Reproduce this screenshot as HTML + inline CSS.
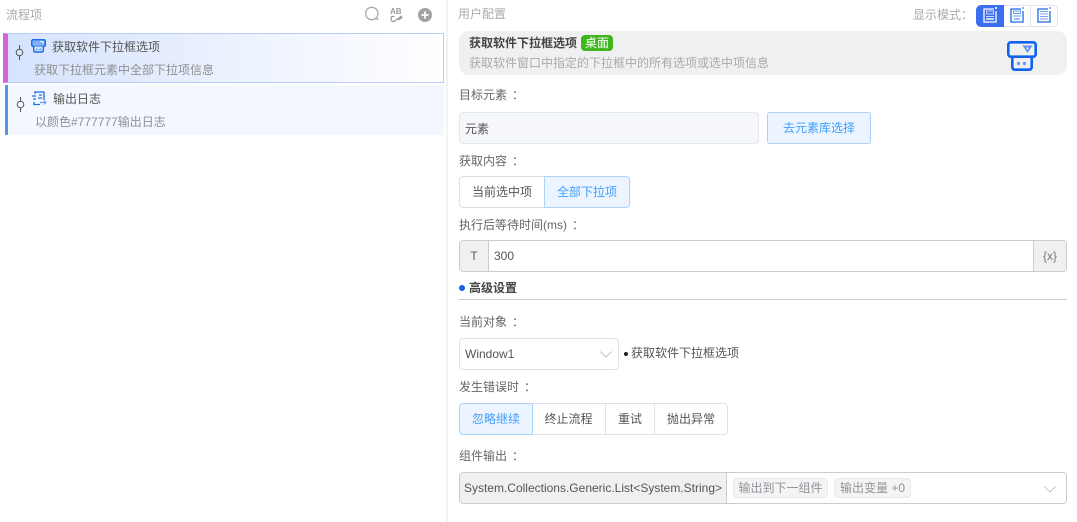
<!DOCTYPE html>
<html lang="zh"><head><meta charset="utf-8"><style>
html,body{margin:0;padding:0;background:#fff}
#p{position:relative;width:1077px;height:522px;overflow:hidden;font:12px/16px "Liberation Sans","Noto Sans CJK SC",sans-serif;color:#606266;filter:blur(.25px)}
#p div,#p svg{position:absolute;box-sizing:border-box}
.t{white-space:nowrap;height:16px}
.b{border:1px solid #dcdfe6}
.c{display:flex;align-items:center;justify-content:center;white-space:nowrap}
.a{background:#ecf5ff;border:1px solid #a9d3fb!important;color:#409eff}
i{font-style:normal;position:relative;left:5px}
</style></head><body><div id="p">
<div style="left:446px;top:0;width:2px;height:522px;background:#f3f3f3"></div>
<div class="t" style="left:6px;top:7px;color:#aaa">流程项</div>
<svg style="left:364px;top:6px" width="16" height="16" viewBox="0 0 16 16" fill="none" stroke="#aaa" stroke-width="1.300"><circle cx="7.800" cy="7.500" r="6.200"/><path d="M12.300 12l2 2"/></svg>
<div style="left:390px;top:8px;font:bold 8px/8px 'Liberation Sans',sans-serif;color:#999">AB</div>
<svg style="left:390px;top:15px" width="13" height="8" viewBox="0 0 13 8" fill="none" stroke="#999" stroke-width="1.200"><path d="M4.500 1.500H2.500Q1 1.500 1 3.500T2.500 6.500H4l4-3"/><path d="M8 4.500l4-3" stroke-width="2.500"/></svg>
<svg style="left:418px;top:8px" width="14" height="14" viewBox="0 0 14 14"><circle cx="7" cy="7" r="7" fill="#a3a3a3"/><path d="M7 3.500v7M3.500 7h7" stroke="#fff" stroke-width="1.800"/></svg>

<div style="left:3px;top:33px;width:441px;height:50px;background:linear-gradient(90deg,#d6e3fd,#fff);border:1px solid #b8cdf9;border-left:5px solid #d663dc"></div>
<svg style="left:15px;top:44px" width="9" height="17" viewBox="0 0 9 17" fill="none" stroke="#555" stroke-width="1"><circle cx="4.500" cy="8.500" r="3.300"/><path d="M4.500 1v4M4.500 12v4"/></svg>
<svg style="left:31px;top:39px" width="15" height="14" viewBox="0 0 15 14"><rect x=".7" y=".7" width="13.600" height="6.800" rx="1.500" fill="#7fb0f7" stroke="#1a6be8" stroke-width="1.400"/><path d="M9 2.500h3v2.500" stroke="#e8f0ff" fill="none"/><path d="M2.700 7.500v4.300q0 1.200 1.200 1.200h7.200q1.200 0 1.200-1.200V7.500" fill="#cfe0fb" stroke="#1a6be8" stroke-width="1.400"/><path d="M5 10.200h1.500M8.500 10.200H10" stroke="#1a6be8"/></svg>
<div class="t" style="left:52px;top:39px;color:#555">获取软件下拉框选项</div>
<div class="t" style="left:34px;top:62px;color:#909090">获取下拉框元素中全部下拉项信息</div>

<div style="left:5px;top:85px;width:439px;height:50px;background:#f3f7ff;border-left:3px solid #5496e2"></div>
<svg style="left:16px;top:96px" width="9" height="17" viewBox="0 0 9 17" fill="none" stroke="#555" stroke-width="1"><circle cx="4.500" cy="8.500" r="3.300"/><path d="M4.500 1v4M4.500 12v4"/></svg>
<svg style="left:32px;top:91px" width="15" height="15" viewBox="0 0 15 15" fill="none" stroke="#1a6be8" stroke-width="1.300"><path d="M3 3V1h9v8M2 11v2.500h6"/><path d="M0 5h4M7 4h3M1 8h3M6 7h4"/><path d="M8 11.500h6" stroke="#6f9cf0"/><path d="M12 9.500l2 2-2 2" stroke="#6f9cf0" stroke-width="1"/></svg>
<div class="t" style="left:53px;top:91px;color:#555">输出日志</div>
<div class="t" style="left:35px;top:114px;color:#909090">以颜色#777777输出日志</div>

<div class="t" style="left:458px;top:6px;color:#aaa">用户配置</div>
<div class="t" style="left:913px;top:7px;color:#aaa">显示模式<i style="left:0">：</i></div>
<div style="left:976px;top:5px;width:82px;height:22px;border:1px solid #e2e5ee;border-radius:5px"></div>
<div style="left:976px;top:5px;width:28px;height:22px;background:#3b6ff0;border-radius:5px 0 0 5px"></div>
<div style="left:1030px;top:5px;width:1px;height:22px;background:#e2e5ee"></div>
<svg style="left:983px;top:7px" width="15" height="16" viewBox="0 0 15 16" fill="none"><path d="M11 2H1v13h12V4" stroke="#fff" stroke-width="1.300"/><rect x="3.500" y="4" width="7" height="3" stroke="#c6d6fb"/><rect x="3" y="9" width="8" height="1" fill="#c6d6fb"/><rect x="3" y="11" width="8" height="2" fill="#c6d6fb"/><rect x="12" y="0" width="2" height="2" fill="#dbe5fd"/></svg>
<svg style="left:1010px;top:7px" width="15" height="16" viewBox="0 0 15 16" fill="none"><path d="M11 2H1v13h12V4" stroke="#1a6be8" stroke-width="1.300"/><rect x="3.500" y="4" width="7" height="2.500" stroke="#6f9cf0"/><rect x="3" y="8.500" width="8" height="1" fill="#6f9cf0"/><rect x="4" y="11" width="6" height="2" fill="#9dbcf5"/><rect x="12" y="0" width="2" height="2" fill="#8fb6f5"/></svg>
<svg style="left:1037px;top:7px" width="15" height="16" viewBox="0 0 15 16" fill="none"><path d="M11 2H1v13h12V4" stroke="#1a6be8" stroke-width="1.300"/><path d="M3 4.500h8M3 7h8M3 9.500h8M3 12h8" stroke="#7ea6f2"/><rect x="12" y="0" width="2" height="2" fill="#8fb6f5"/></svg>

<div style="left:459px;top:31px;width:608px;height:44px;background:#f0f0f0;border-radius:10px"></div>
<div class="t" style="left:469px;top:35px;font-weight:bold;color:#444">获取软件下拉框选项</div>
<div class="c" style="left:581px;top:35px;width:32px;height:16px;background:#3fb51f;border-radius:4px;color:#fff">桌面</div>
<div class="t" style="left:469px;top:55px;color:#aaa">获取软件窗口中指定的下拉框中的所有选项或选中项信息</div>
<svg style="left:1007px;top:41px" width="30" height="30" viewBox="0 0 30 30"><rect x="1.300" y="1.300" width="27.400" height="14.400" rx="2.500" fill="#f0f0f0" stroke="#1062f0" stroke-width="2.600"/><path d="M15.500 4.500h10l-5 7.500z" fill="#5d8ff0"/><path d="M19 6.500h3l-1.500 2.500z" fill="#eef3ff"/><path d="M5.300 16.500v9.700a2.500 2.500 0 0 0 2.500 2.500h14.400a2.500 2.500 0 0 0 2.500-2.500v-9.700" fill="none" stroke="#1062f0" stroke-width="2.600"/><circle cx="11.500" cy="22.500" r="1.700" fill="#6f9cf0"/><circle cx="17.500" cy="22.500" r="1.700" fill="#6f9cf0"/></svg>

<div class="t" style="left:459px;top:87px;color:#666">目标元素<i>：</i></div>
<div class="b" style="left:459px;top:112px;width:300px;height:32px;background:#f5f7fa;border-radius:4px;border-color:#e4e7ed"></div>
<div class="t" style="left:465px;top:121px;color:#555">元素</div>
<div class="c a" style="left:767px;top:112px;width:104px;height:32px;border-radius:3px">去元素库选择</div>

<div class="t" style="left:459px;top:153px;color:#666">获取内容<i>：</i></div>
<div class="c b" style="left:459px;top:176px;width:86px;height:32px;border-radius:4px 0 0 4px;color:#555">当前选中项</div>
<div class="c a" style="left:544px;top:176px;width:86px;height:32px;border-radius:0 4px 4px 0">全部下拉项</div>

<div class="t" style="left:459px;top:217px;color:#666">执行后等待时间(ms)<i>：</i></div>
<div class="b" style="left:459px;top:240px;width:608px;height:32px;border-color:#ccc;border-radius:4px;overflow:hidden"></div>
<div class="c" style="left:460px;top:241px;width:29px;height:30px;background:#f0f0f0;border-right:1px solid #ccc;border-radius:3px 0 0 3px">T</div>
<div class="t" style="left:494px;top:248px;color:#555">300</div>
<div class="c" style="left:1033px;top:241px;width:33px;height:30px;background:#f0f0f0;border-left:1px solid #ccc;border-radius:0 3px 3px 0;color:#777">{x}</div>

<div style="left:459px;top:285px;width:6px;height:6px;background:#0f62e6;border-radius:50%"></div>
<div class="t" style="left:469px;top:280px;font-weight:bold;color:#444">高级设置</div>
<div style="left:459px;top:299px;width:608px;height:1px;background:#ccc"></div>

<div class="t" style="left:459px;top:314px;color:#666">当前对象<i>：</i></div>
<div class="b" style="left:459px;top:338px;width:160px;height:32px;border-radius:4px;border-color:#e0e2ea"></div>
<div class="t" style="left:465px;top:346px;color:#555">Window1</div>
<svg style="left:600px;top:351px" width="12" height="7" viewBox="0 0 12 7" fill="none" stroke="#c0c4cc"><path d="M.5.500L6 6l5.500-5.500"/></svg>
<div style="left:624px;top:352px;width:4px;height:4px;background:#222;border-radius:50%"></div>
<div class="t" style="left:631px;top:345px;color:#555">获取软件下拉框选项</div>

<div class="t" style="left:459px;top:379px;color:#666">发生错误时<i>：</i></div>
<div class="c a" style="left:459px;top:403px;width:74px;height:32px;border-radius:4px 0 0 4px">忽略继续</div>
<div class="c b" style="left:532px;top:403px;width:74px;height:32px;border-left:0;color:#555;border-color:#e0e2ea">终止流程</div>
<div class="c b" style="left:605px;top:403px;width:50px;height:32px;color:#555;border-color:#e0e2ea">重试</div>
<div class="c b" style="left:654px;top:403px;width:74px;height:32px;border-radius:0 4px 4px 0;color:#555;border-color:#e0e2ea">抛出异常</div>

<div class="t" style="left:459px;top:448px;color:#666">组件输出<i>：</i></div>
<div class="b" style="left:459px;top:472px;width:608px;height:32px;border-color:#ccc;border-radius:4px"></div>
<div class="c" style="left:460px;top:473px;width:267px;height:30px;background:#f0f0f0;border-right:1px solid #ccc;border-radius:3px 0 0 3px;color:#555">System.Collections.Generic.List&lt;System.String&gt;</div>
<div class="c" style="left:733px;top:478px;width:95px;height:20px;background:#f4f4f5;border:1px solid #e9e9eb;border-radius:4px;color:#909399">输出到下一组件</div>
<div class="c" style="left:834px;top:478px;width:77px;height:20px;background:#f4f4f5;border:1px solid #e9e9eb;border-radius:4px;color:#909399">输出变量 +0</div>
<svg style="left:1044px;top:486px" width="12" height="7" viewBox="0 0 12 7" fill="none" stroke="#c0c4cc"><path d="M.5.500L6 6l5.500-5.500"/></svg>
</div></body></html>
